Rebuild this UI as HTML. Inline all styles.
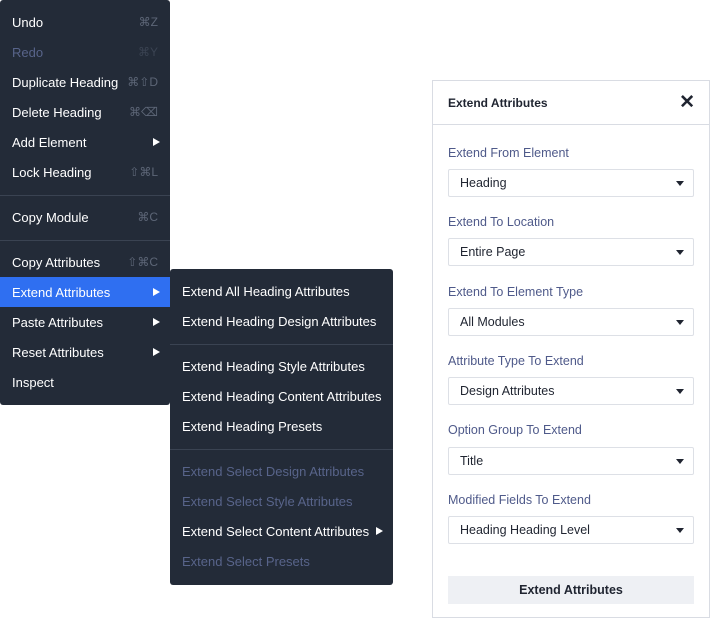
<!DOCTYPE html>
<html><head><style>
*{margin:0;padding:0;box-sizing:border-box}
body{width:710px;height:620px;background:#fff;font-family:"Liberation Sans",sans-serif;position:relative;overflow:hidden}
.menu{position:absolute;background:#232b38;border-radius:3px;color:#fff;font-size:13px}
.it{position:absolute;left:0;right:0;height:30px;line-height:31px;padding-left:12px}
.sc{position:absolute;right:12px;top:0;color:#5d6677;font-size:12px}
.arr{position:absolute;right:10px;top:11px;width:0;height:0;border-left:7px solid #fff;border-top:4px solid transparent;border-bottom:4px solid transparent}
.dis{color:#58648a}
.sep{position:absolute;left:0;right:0;height:1px;background:#3a4352}
.panel{position:absolute;left:432px;top:80px;width:278px;height:538px;border:1px solid #d9dce3;background:#fff}
.hd{height:44px;border-bottom:1px solid #d9dce3;font-size:12px;font-weight:bold;color:#1f2430;line-height:44px;padding-left:15px;position:relative}
.x{position:absolute;right:14px;top:0;font-size:19px;font-weight:bold}
.lb{position:absolute;left:15px;font-size:12.5px;color:#4f5a8a}
.sel{position:absolute;left:15px;width:246px;height:28px;border:1px solid #dde0e6;border-radius:2px;font-size:12.5px;color:#1f2430;line-height:26px;padding-left:11px}
.sel:after{content:"";position:absolute;right:9px;top:11px;border-top:5px solid #1f2430;border-left:4px solid transparent;border-right:4px solid transparent}
.btn{position:absolute;left:15px;top:495px;width:246px;height:28px;background:#eef0f4;font-size:12.5px;font-weight:bold;color:#1f2430;text-align:center;line-height:28px}
</style></head><body>
<div class="menu" style="left:0;top:0;width:170px;height:405px">
<div class="it" style="top:7px">Undo<span class="sc">⌘Z</span></div>
<div class="it dis" style="top:37px">Redo<span class="sc" style="color:#3a4352">⌘Y</span></div>
<div class="it" style="top:67px">Duplicate Heading<span class="sc">⌘⇧D</span></div>
<div class="it" style="top:97px">Delete Heading<span class="sc">⌘⌫</span></div>
<div class="it" style="top:127px">Add Element<span class="arr"></span></div>
<div class="it" style="top:157px">Lock Heading<span class="sc">⇧⌘L</span></div>
<div class="sep" style="top:195px"></div>
<div class="it" style="top:202px">Copy Module<span class="sc">⌘C</span></div>
<div class="sep" style="top:240px"></div>
<div class="it" style="top:247px">Copy Attributes<span class="sc">⇧⌘C</span></div>
<div class="it" style="top:277px;background:#2f6ff1">Extend Attributes<span class="arr"></span></div>
<div class="it" style="top:307px">Paste Attributes<span class="arr"></span></div>
<div class="it" style="top:337px">Reset Attributes<span class="arr"></span></div>
<div class="it" style="top:367px">Inspect</div>
</div>
<div class="menu" style="left:170px;top:269px;width:223px;height:316px">
<div class="it" style="top:7px">Extend All Heading Attributes</div>
<div class="it" style="top:37px">Extend Heading Design Attributes</div>
<div class="sep" style="top:75px"></div>
<div class="it" style="top:82px">Extend Heading Style Attributes</div>
<div class="it" style="top:112px">Extend Heading Content Attributes</div>
<div class="it" style="top:142px">Extend Heading Presets</div>
<div class="sep" style="top:180px"></div>
<div class="it dis" style="top:187px">Extend Select Design Attributes</div>
<div class="it dis" style="top:217px">Extend Select Style Attributes</div>
<div class="it" style="top:247px">Extend Select Content Attributes<span class="arr"></span></div>
<div class="it dis" style="top:277px">Extend Select Presets</div>
</div>
<div class="panel">
<div class="hd">Extend Attributes<span class="x">✕</span></div>
<div class="lb" style="top:65px">Extend From Element</div>
<div class="sel" style="top:88px">Heading</div>
<div class="lb" style="top:134px">Extend To Location</div>
<div class="sel" style="top:157px">Entire Page</div>
<div class="lb" style="top:204px">Extend To Element Type</div>
<div class="sel" style="top:227px">All Modules</div>
<div class="lb" style="top:273px">Attribute Type To Extend</div>
<div class="sel" style="top:296px">Design Attributes</div>
<div class="lb" style="top:342px">Option Group To Extend</div>
<div class="sel" style="top:366px">Title</div>
<div class="lb" style="top:412px">Modified Fields To Extend</div>
<div class="sel" style="top:435px">Heading Heading Level</div>
<div class="btn">Extend Attributes</div>
</div>
</body></html>
